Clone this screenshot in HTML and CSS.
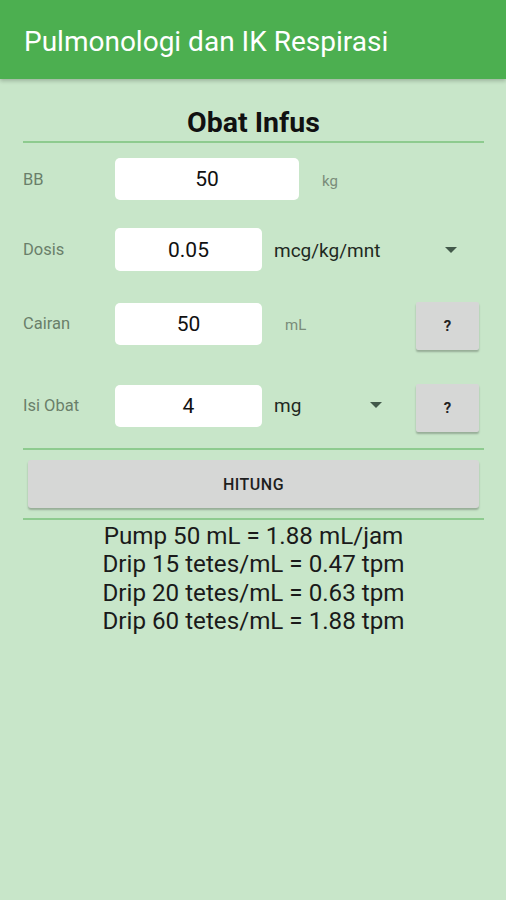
FILE: index.html
```html
<!DOCTYPE html>
<html lang="id">
<head>
<meta charset="utf-8">
<title>Obat Infus</title>
<link rel="stylesheet" href="styles.css">
</head>
<body>
<header class="appbar">
  <h1 class="appbar-title">Pulmonologi dan IK Respirasi</h1>
</header>
<main class="content">
  <h2 class="page-title">Obat Infus</h2>
  <div class="divider"></div>

  <div class="row row-bb">
    <span class="label">BB</span>
    <div class="field field-wide">50</div>
    <span class="unit">kg</span>
  </div>

  <div class="row row-dosis">
    <span class="label">Dosis</span>
    <div class="field">0.05</div>
    <div class="spinner spinner-dosis">
      <span class="spinner-text">mcg/kg/mnt</span>
      <span class="arrow"></span>
    </div>
  </div>

  <div class="row row-cairan">
    <span class="label">Cairan</span>
    <div class="field field-offset">50</div>
    <span class="unit">mL</span>
    <button class="help-btn">?</button>
  </div>

  <div class="row row-isi">
    <span class="label">Isi Obat</span>
    <div class="field field-offset">4</div>
    <div class="spinner spinner-isi">
      <span class="spinner-text">mg</span>
      <span class="arrow"></span>
    </div>
    <button class="help-btn">?</button>
  </div>

  <div class="divider divider-mid"></div>
  <button class="calc-btn">HITUNG</button>
  <div class="divider divider-low"></div>

  <div class="results">
    <p>Pump 50 mL = 1.88 mL/jam</p>
    <p>Drip 15 tetes/mL = 0.47 tpm</p>
    <p>Drip 20 tetes/mL = 0.63 tpm</p>
    <p>Drip 60 tetes/mL = 1.88 tpm</p>
  </div>
</main>
</body>
</html>
```

FILE: styles.css
```css
* { box-sizing: border-box; }
html, body {
  margin: 0;
  padding: 0;
}
body {
  background: #C8E6C9;
  font-family: Roboto, "Noto Sans", "Liberation Sans", sans-serif;
  width: 506px;
  min-height: 900px;
}
.appbar {
  height: 79px;
  background: #4CAF50;
  display: flex;
  align-items: center;
  padding-left: 24px;
  box-shadow: 0 2px 4px rgba(0, 0, 0, 0.22);
  position: relative;
}
.appbar-title {
  margin: 0;
  color: #ffffff;
  font-size: 28px;
  font-weight: 400;
  line-height: 34px;
  padding-top: 4px;
}
.content {
  padding: 0 22px 0 23px;
}
.page-title {
  margin: 28px 0 0 0;
  text-align: center;
  font-size: 28.5px;
  font-weight: 700;
  line-height: 32px;
  color: #111111;
}
.divider {
  height: 2px;
  background: #8ECB8F;
  margin-top: 2px;
}
.row {
  display: flex;
  align-items: center;
}
.row-bb { margin-top: 15px; height: 42px; }
.row-dosis { margin-top: 28px; height: 43px; }
.row-cairan { margin-top: 30px; height: 51px; align-items: flex-start; }
.row-isi { margin-top: 31px; height: 50px; align-items: flex-start; }
.label {
  width: 92px;
  font-size: 16.5px;
  color: #6A7F6A;
}
.row-cairan .label, .row-isi .label { margin-top: 13px; }
.field {
  width: 147px;
  height: 100%;
  background: #ffffff;
  border-radius: 5px;
  display: flex;
  align-items: center;
  justify-content: center;
  font-size: 21px;
  color: #111111;
}
.field-wide { width: 184px; }
.field-offset { height: 42px; margin-top: 2px; }
.unit {
  margin-left: 23px;
  font-size: 15px;
  color: #7A8C7A;
  padding-top: 3px;
}
.row-cairan .unit { margin-top: 12px; }
.spinner {
  display: flex;
  align-items: center;
  justify-content: space-between;
  padding: 0 5px 0 12px;
}
.spinner-dosis { width: 200px; }
.spinner-isi { width: 125px; margin-top: 9px; }
.spinner-text {
  font-size: 19px;
  color: #1F2A1F;
  padding-top: 2px;
}
.arrow {
  width: 0;
  height: 0;
  border-left: 6px solid transparent;
  border-right: 6px solid transparent;
  border-top: 6px solid #42594A;
}
.help-btn {
  margin-left: auto;
  margin-right: 5px;
  width: 63px;
  height: 48px;
  margin-top: 1px;
  border: none;
  border-radius: 2px;
  background: #D6D7D6;
  box-shadow: 0 2px 2px rgba(0, 0, 0, 0.25);
  font-family: Roboto, "Noto Sans", "Liberation Sans", sans-serif;
  font-size: 15px;
  font-weight: 700;
  color: #222222;
  padding: 0;
}
.divider-mid { margin-top: 15px; }
.calc-btn {
  display: block;
  margin: 10px 5px 0 5px;
  width: calc(100% - 10px);
  height: 48px;
  border: none;
  border-radius: 3px;
  background: #D6D7D6;
  box-shadow: 0 2px 2px rgba(0, 0, 0, 0.25);
  font-family: Roboto, "Noto Sans", "Liberation Sans", sans-serif;
  font-size: 16px;
  font-weight: 500;
  letter-spacing: 0.5px;
  color: #1E1E1E;
}
.divider-low { margin-top: 10px; }
.results {
  margin-top: 2px;
  text-align: center;
}
.results p {
  margin: 0;
  font-size: 24.2px;
  line-height: 28.4px;
  color: #1A1A1A;
}
```
